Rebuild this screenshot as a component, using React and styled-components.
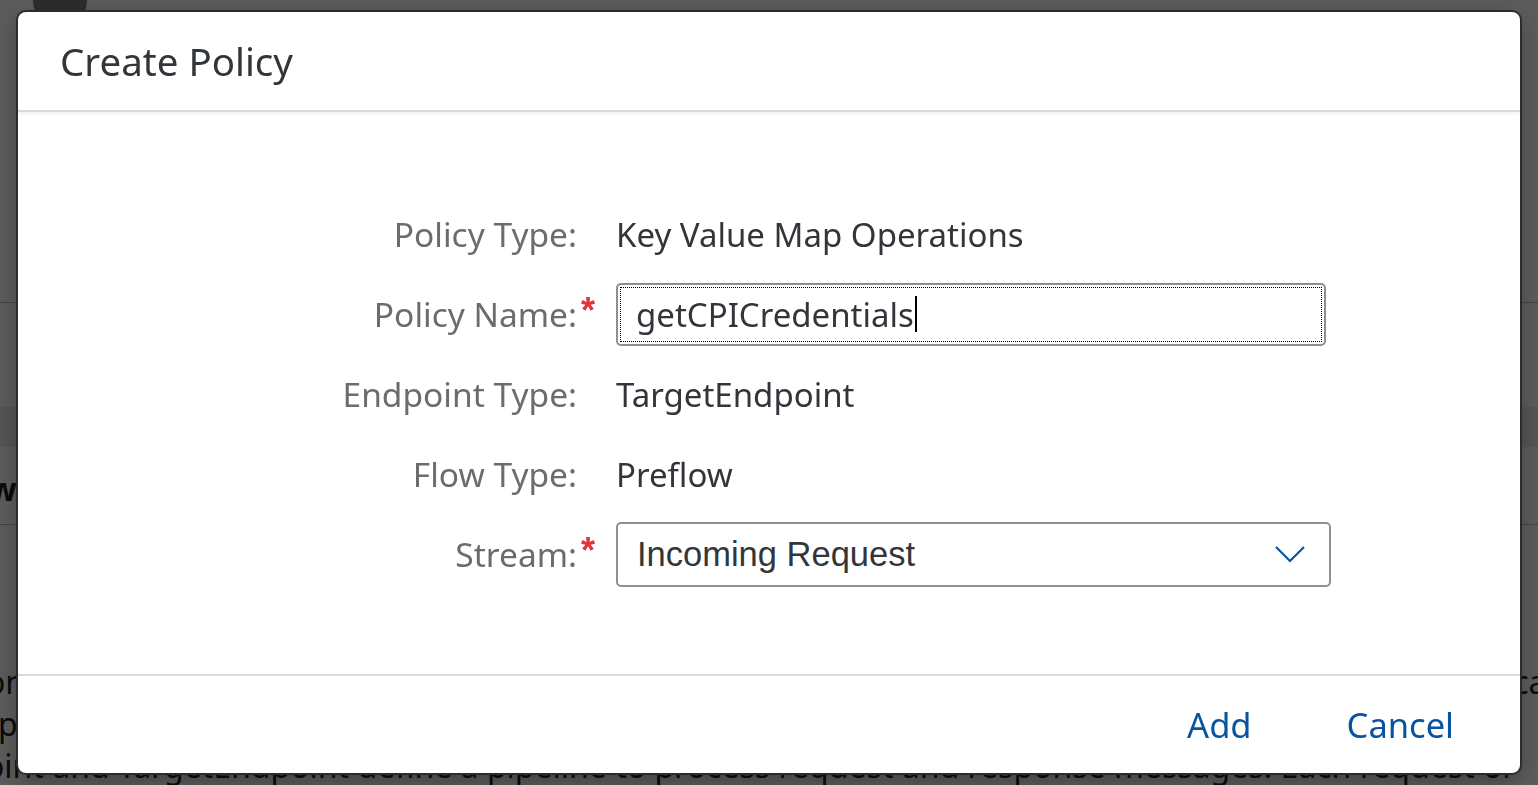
import React from "react";
import styled, { createGlobalStyle } from "styled-components";

const FONT = `"Noto Sans", "Open Sans", Arial, sans-serif`;

const GlobalStyle = createGlobalStyle`
  html, body { margin: 0; padding: 0; }
  body {
    width: 1538px;
    height: 785px;
    overflow: hidden;
    background: #ffffff;
    font-family: ${FONT};
  }
`;

/* ---------- underlying page (behind the modal) ---------- */
const Page = styled.div`
  position: relative;
  width: 1538px;
  height: 785px;
  overflow: hidden;
  background: #ffffff;
  display: flex;
  flex-direction: column;
`;

const ShellBar = styled.div`
  height: 303px;
  flex: none;
  border-bottom: 1px solid #b8b8b8;
  padding-left: 33px;
  box-sizing: border-box;
`;

const Avatar = styled.div`
  width: 54px;
  height: 54px;
  margin-top: -26px;
  border-radius: 50%;
  background: #7a7a7a;
`;

const Spacer = styled.div`
  height: ${(p) => p.$h}px;
  flex: none;
`;

const Band = styled.div`
  height: 40px;
  flex: none;
  background: #ececec;
`;

const SectionTitle = styled.div`
  height: 78px;
  flex: none;
  border-bottom: 1px solid #b8b8b8;
  box-sizing: border-box;
  display: flex;
  align-items: center;
  padding-top: 6px;
  font-size: 32px;
  font-weight: 700;
  color: #1d1d1d;
  white-space: nowrap;
  & > span { margin-left: -134px; }
`;

const Paragraph = styled.div`
  margin-top: 136px;
  font-size: 32px;
  line-height: 42px;
  color: #222;
  white-space: nowrap;
`;

const Line = styled.div`
  margin-left: ${(p) => p.$shift}px;
`;

const Scrim = styled.div`
  position: fixed;
  inset: 0;
  background: rgba(0, 0, 0, 0.645);
  display: flex;
  align-items: center;
  justify-content: center;
`;

/* ---------- dialog ---------- */
const Dialog = styled.div`
  width: 1502px;
  height: 761px;
  box-sizing: border-box;
  background: #ffffff;
  border-radius: 8px;
  box-shadow: 0 0 0 2px #2c2c2c, 0 8px 24px rgba(0, 0, 0, 0.3);
  display: flex;
  flex-direction: column;
  overflow: hidden;
`;

const Header = styled.header`
  height: 100px;
  flex: none;
  box-sizing: border-box;
  border-bottom: 2px solid #d9d9d9;
  box-shadow: 0 2px 4px rgba(0, 0, 0, 0.06);
  display: flex;
  align-items: center;
  padding-left: 42px;
  position: relative;
  z-index: 1;
`;

const Title = styled.h1`
  margin: 0;
  font-family: ${FONT};
  font-weight: 400;
  font-size: 38.5px;
  color: #32363a;
`;

const Content = styled.div`
  flex: 1;
  padding-top: 90px;
  box-sizing: border-box;
`;

const Form = styled.div`
  display: grid;
  grid-template-columns: 559px 39px 716px;
  grid-auto-rows: 64px;
  row-gap: 16px;
  align-items: center;
`;

const Label = styled.div`
  text-align: right;
  font-size: 33.5px;
  color: #6a6d70;
  white-space: nowrap;
`;

const Required = styled.div`
  align-self: center;
  padding-left: 4px;
  margin-top: -6px;
  font-size: 36px;
  font-weight: 700;
  color: #e0353a;
  font-family: "Liberation Sans", Arial, sans-serif;
  line-height: 1;
`;

const Value = styled.div`
  font-size: 33px;
  color: #32363a;
  white-space: nowrap;
`;

const Field = styled.div`
  width: ${(p) => p.$w}px;
  height: ${(p) => p.$h}px;
  box-sizing: border-box;
  border: 2px solid #89919a;
  border-radius: 5px;
  background: #fff;
  display: flex;
  align-items: center;
  position: relative;
`;

const FocusRing = styled.div`
  position: absolute;
  inset: 2px;
  border: 1px dotted #000;
  pointer-events: none;
`;

const InputText = styled.span`
  padding-left: 18px;
  font-size: 33px;
  color: #32363a;
`;

const Caret = styled.span`
  display: inline-block;
  width: 0;
  height: 36px;
  border-left: 2px solid #000;
  margin-left: 1px;
`;

const SelectText = styled.span`
  flex: 1;
  padding-left: 19px;
  font-family: "Liberation Sans", Arial, sans-serif;
  font-size: 34.5px;
  color: #32363a;
`;

const Chevron = styled.svg`
  width: 32px;
  height: 20px;
  margin-right: 23px;
  flex: none;
`;

const Footer = styled.footer`
  height: 99px;
  flex: none;
  box-sizing: border-box;
  border-top: 2px solid #d9d9d9;
  display: flex;
  align-items: center;
  justify-content: flex-end;
  gap: 63px;
  padding-right: 50px;
`;

const TextButton = styled.button`
  background: none;
  border: none;
  padding: 0 16px;
  height: 64px;
  font-family: ${FONT};
  font-size: 34.5px;
  color: #0854a0;
  cursor: pointer;
`;

export default function App() {
  const rows = [
    { label: "Policy Type:", value: "Key Value Map Operations" },
    { label: "Policy Name:", required: true, input: "getCPICredentials" },
    { label: "Endpoint Type:", value: "TargetEndpoint" },
    { label: "Flow Type:", value: "Preflow" },
    { label: "Stream:", required: true, select: "Incoming Request" },
  ];

  return (
    <>
      <GlobalStyle />
      <Page>
        <ShellBar>
          <Avatar />
        </ShellBar>
        <Spacer $h={104} />
        <Band />
        <SectionTitle>
          <span>Overview</span>
        </SectionTitle>
        <Paragraph>
          <Line $shift={-14}>
            one proxy endpoint and one or more target endpoints that can be set up in the API proxy, which then can
          </Line>
          <Line $shift={-2}>pipeline</Line>
          <Line $shift={-92}>
            Endpoint and TargetEndpoint define a pipeline to process request and response messages. Each request or
          </Line>
        </Paragraph>
      </Page>
      <Scrim>
        <Dialog role="dialog" aria-label="Create Policy">
          <Header>
            <Title>Create Policy</Title>
          </Header>
          <Content>
            <Form>
              {rows.map((r) => (
                <React.Fragment key={r.label}>
                  <Label>{r.label}</Label>
                  {r.required ? <Required>*</Required> : <div />}
                  {r.value && <Value>{r.value}</Value>}
                  {r.input && (
                    <Field $w={710} $h={63}>
                      <FocusRing />
                      <InputText>{r.input}</InputText>
                      <Caret />
                    </Field>
                  )}
                  {r.select && (
                    <Field $w={715} $h={65}>
                      <SelectText>{r.select}</SelectText>
                      <Chevron viewBox="0 0 32 20">
                        <path d="M2 3 L16 17 L30 3" fill="none" stroke="#0854a0" strokeWidth="2.2" />
                      </Chevron>
                    </Field>
                  )}
                </React.Fragment>
              ))}
            </Form>
          </Content>
          <Footer>
            <TextButton>Add</TextButton>
            <TextButton>Cancel</TextButton>
          </Footer>
        </Dialog>
      </Scrim>
    </>
  );
}
